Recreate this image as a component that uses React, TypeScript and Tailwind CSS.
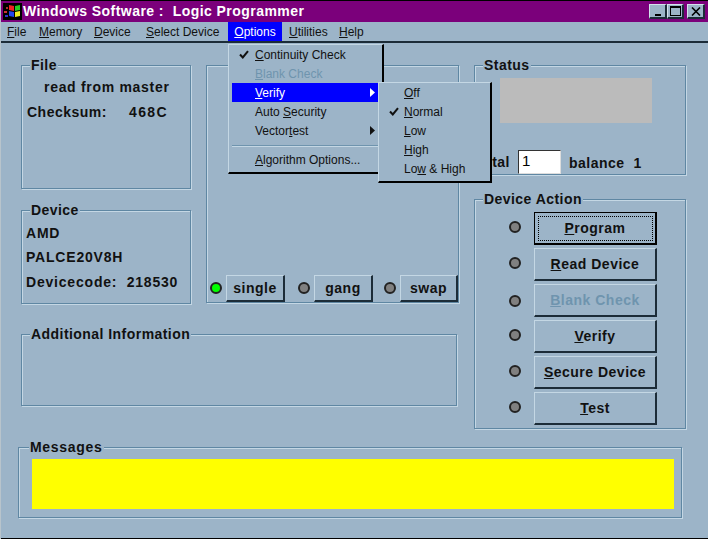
import type { ReactNode } from "react";

const Group = ({
  title,
  className,
  titleClass = "left-[8px] tracking-[0.45px]",
  children,
}: {
  title: string;
  className: string;
  titleClass?: string;
  children?: ReactNode;
}) => (
  <div className={`relative border border-[#5f87a3] shadow-[1px_1px_0_#c4d7e4,inset_1px_1px_0_#c4d7e4] ${className}`}>
    {title && (
      <span className={`absolute top-[-10px] bg-[#9cb4c8] px-[1px] text-[14px] leading-[18px] font-bold text-[#111] ${titleClass}`}>
        {title}
      </span>
    )}
    {children}
  </div>
);

const Led = ({ on, className = "" }: { on?: boolean; className?: string }) => (
  <span
    className={`block size-[12px] shrink-0 rounded-full border-2 border-[#222] ${on ? "bg-[#00ff00]" : "bg-[#808080]"} ${className}`}
  />
);

const RaisedButton = ({
  className,
  disabled,
  children,
}: {
  className: string;
  disabled?: boolean;
  children: ReactNode;
}) => (
  <div
    className={`flex items-center justify-center border-t border-l border-t-[#c4d7e4] border-l-[#c4d7e4] border-r-2 border-b-2 border-r-[#1c2c38] border-b-[#1c2c38] text-[14px] font-bold tracking-[0.5px] ${
      disabled ? "text-[#6f94ae]" : "text-[#111]"
    } ${className}`}
  >
    <span>{children}</span>
  </div>
);

const MenuItem = ({
  label,
  checked,
  active,
  disabled,
  arrow,
  left,
}: {
  label: ReactNode;
  checked?: boolean;
  active?: boolean;
  disabled?: boolean;
  arrow?: boolean;
  left: string;
}) => (
  <div
    className={`relative flex h-[19px] items-center ${left} ${
      active ? "bg-[#0000ff] text-white" : disabled ? "text-[#6f94ae]" : "text-[#111]"
    }`}
  >
    {checked && (
      <svg className="absolute left-[7px] top-[5px]" width="10" height="9" viewBox="0 0 10 9">
        <path d="M1 4.5 L3.8 7.5 L9 1.2" fill="none" stroke="#111" strokeWidth="2" />
      </svg>
    )}
    <span>{label}</span>
    {arrow && (
      <svg className="absolute right-[3px] top-[5px]" width="6" height="9" viewBox="0 0 6 9">
        <path d="M0 0 L5 4.5 L0 9 Z" fill={active ? "#fff" : "#111"} />
      </svg>
    )}
  </div>
);

const WinButton = ({ className, children }: { className: string; children: ReactNode }) => (
  <div
    className={`flex h-[15px] items-center justify-center border-t border-l border-[#d4e2ec] border-r-2 border-b-2 border-r-[#1c2c38] border-b-[#1c2c38] bg-[#9cb4c8] ${className}`}
  >
    {children}
  </div>
);

export default function App() {
  return (
    <div
      className="relative flex h-[539px] w-[708px] flex-col overflow-hidden border-l border-[#b8c4cc] bg-[#9cb4c8] text-[#111]"
      style={{ fontFamily: '"Liberation Sans", Arial, sans-serif' }}
    >
      {/* title bar */}
      <div className="flex h-[22px] items-center border-t border-black bg-[#7b007b] pr-[3px]">
        <svg className="ml-[2px] shrink-0" width="19" height="17" viewBox="0 0 19 17">
          <rect width="19" height="17" fill="#000" />
          <rect x="3" y="4" width="2" height="2" fill="#a33" />
          <rect x="1" y="8" width="3" height="2" fill="#c33" />
          <rect x="2" y="12" width="3" height="2" fill="#33c" />
          <path d="M6 2 L11 3 L11 8 L6 7 Z" fill="#e22" />
          <path d="M12 3 L17 2 L17 7 L12 8 Z" fill="#2c2" />
          <path d="M6 8 L11 9 L11 14 L6 13 Z" fill="#24e" />
          <path d="M12 9 L17 8 L17 13 L12 14 Z" fill="#ee2" />
        </svg>
        <span className="ml-[1px] text-[14px] font-bold tracking-[0.45px] text-white">
          Windows Software :&nbsp; Logic Programmer
        </span>
        <div className="ml-auto flex items-center">
          <WinButton className="w-[18px] items-end pb-[1px]">
            <span className="block h-[2px] w-[6px] bg-black" />
          </WinButton>
          <WinButton className="w-[17px]">
            <span className="block h-[10px] w-[11px] border border-t-2 border-black" />
          </WinButton>
          <WinButton className="ml-[3px] w-[18px]">
            <svg width="10" height="9" viewBox="0 0 10 9">
              <path d="M1 0.5 L9 8.5 M9 0.5 L1 8.5" stroke="#000" strokeWidth="1.6" />
            </svg>
          </WinButton>
        </div>
      </div>

      {/* menu bar */}
      <div className="flex h-[21px] items-end border-b-2 border-[#1c2c38] pl-[6px] text-[12px] text-[#111]">
        <span className="w-[32px]"><u>F</u>ile</span>
        <span className="w-[55px]"><u>M</u>emory</span>
        <span className="w-[52px]"><u>D</u>evice</span>
        <span className="w-[82px]"><u>S</u>elect Device</span>
        <span className="flex h-[19px] w-[54px] items-end justify-center bg-[#0000ff] text-white"><span><u>O</u>ptions</span></span>
        <span className="ml-[7px] w-[50px]"><u>U</u>tilities</span>
        <span><u>H</u>elp</span>
      </div>

      {/* panels */}
      <div className="ml-[20px] mt-[22px] flex">
        <div className="flex w-[438px] flex-col">
          <div className="flex gap-[15px]">
            <div className="flex w-[170px] flex-col gap-[21px]">
              <Group title="File" className="h-[124px] text-[14px] font-bold tracking-[0.7px]">
                <p className="mt-[12px] ml-[22px] leading-[18px]">read from master</p>
                <p className="mt-[7px] ml-[5px] flex leading-[18px] tracking-[0.5px]">
                  <span className="w-[102px]">Checksum:</span>
                  <span className="tracking-[1.4px]">468C</span>
                </p>
              </Group>
              <Group title="Device" className="h-[94px] text-[14px] font-bold tracking-[0.8px]">
                <p className="mt-[13px] ml-[4px] leading-[18px]">AMD</p>
                <p className="mt-[6px] ml-[4px] leading-[18px]">PALCE20V8H</p>
                <p className="mt-[7px] ml-[4px] leading-[18px] whitespace-pre">Devicecode:  218530</p>
              </Group>
            </div>
            <Group title="" className="flex h-[238px] w-[253px] items-end">
              <div className="flex w-full items-center justify-end">
                <Led on className="mb-[1px] mr-[4px]" />
                <RaisedButton className="h-[27px] w-[59px]">single</RaisedButton>
                <Led className="mb-[1px] ml-[13px] mr-[4px]" />
                <RaisedButton className="h-[27px] w-[59px]">gang</RaisedButton>
                <Led className="mb-[1px] ml-[11px] mr-[4px]" />
                <RaisedButton className="h-[27px] w-[58px]">swap</RaisedButton>
              </div>
            </Group>
          </div>
          <Group title="Additional Information" className="mt-[30px] h-[72px] w-[436px]" />
        </div>

        <div className="ml-[15px] flex w-[212px] flex-col gap-[24px]">
          <Group title="Status" className="h-[110px] text-[14px] font-bold tracking-[0.5px]">
            <div className="mt-[12px] ml-[25px] h-[45px] w-[152px] bg-[#bbbbbb]" />
            <div className="mt-[27px] flex items-center">
              <span className="ml-[5px] flex w-[38px] justify-end pr-[8px]">total</span>
              <span className="flex h-[24px] w-[43px] items-start border border-[#333] border-b-[#ddd] border-r-[#ddd] bg-white pl-[3px] text-[15px] leading-[20px] font-normal text-black">
                1
              </span>
              <span className="ml-[8px] mt-[2px] whitespace-pre">balance  1</span>
            </div>
          </Group>
          <Group title="Device Action" className="h-[230px]">
            <div className="ml-[34px] mt-[12px] flex flex-col gap-[3px]">
              {[
                { label: <><u>P</u>rogram</> },
                { label: <><u>R</u>ead Device</> },
                { label: <><u>B</u>lank Check</>, disabled: true },
                { label: <><u>V</u>erify</> },
                { label: <><u>S</u>ecure Device</> },
                { label: <><u>T</u>est</> },
              ].map((b, i) => (
                <div key={i} className="flex items-center gap-[13px]">
                  <Led className={i === 2 ? "" : "mb-[3px]"} />
                  {i === 0 ? (
                    <div className="flex h-[33px] w-[123px] items-center justify-center border border-black border-r-2 border-b-2 text-[14px] font-bold tracking-[0.5px]">
                      <span className="flex h-[25px] w-[115px] items-center justify-center border border-dotted border-black">
                        <span>{b.label}</span>
                      </span>
                    </div>
                  ) : (
                    <RaisedButton className="h-[33px] w-[123px]" disabled={b.disabled}>
                      {b.label}
                    </RaisedButton>
                  )}
                </div>
              ))}
            </div>
          </Group>
        </div>
      </div>

      <Group
        title="Messages"
        titleClass="left-[10px] tracking-[0.7px]"
        className="ml-[17px] mt-[18px] h-[71px] w-[664px]"
      >
        <div className="mt-[11px] ml-[13px] h-[50px] w-[642px] bg-[#ffff00]" />
      </Group>

      <div className="absolute inset-x-0 bottom-0 h-[1px] bg-black" />

      {/* open menus */}
      <div className="absolute left-[227px] top-[44px] h-[130px] w-[156px] border-t border-l border-[#c4d7e4] border-r-2 border-b-2 border-r-black border-b-black bg-[#9cb4c8] pl-[3px] pr-[3px] text-[12px]">
        <MenuItem left="pl-[23px]" checked label={<><u>C</u>ontinuity Check</>} />
        <MenuItem left="pl-[23px]" disabled label={<><u>B</u>lank Check</>} />
        <MenuItem left="pl-[23px]" active arrow label={<><u>V</u>erify</>} />
        <MenuItem left="pl-[23px]" label={<>Auto <u>S</u>ecurity</>} />
        <MenuItem left="pl-[23px]" arrow label={<>Vector<u>t</u>est</>} />
        <div className="mt-[5px] mb-[3px] border-t border-b border-t-[#6f94ae] border-b-[#c4d7e4]" />
        <MenuItem left="pl-[23px]" label={<><u>A</u>lgorithm Options...</>} />
      </div>
      <div className="absolute left-[377px] top-[82px] h-[101px] w-[114px] border-t border-l border-[#c4d7e4] border-r-2 border-b-2 border-r-black border-b-black bg-[#9cb4c8] pl-[3px] pr-[3px] text-[12px]">
        <MenuItem left="pl-[22px]" label={<><u>O</u>ff</>} />
        <MenuItem left="pl-[22px]" checked label={<><u>N</u>ormal</>} />
        <MenuItem left="pl-[22px]" label={<><u>L</u>ow</>} />
        <MenuItem left="pl-[22px]" label={<><u>H</u>igh</>} />
        <MenuItem left="pl-[22px]" label={<>Lo<u>w</u> &amp; High</>} />
      </div>
    </div>
  );
}
